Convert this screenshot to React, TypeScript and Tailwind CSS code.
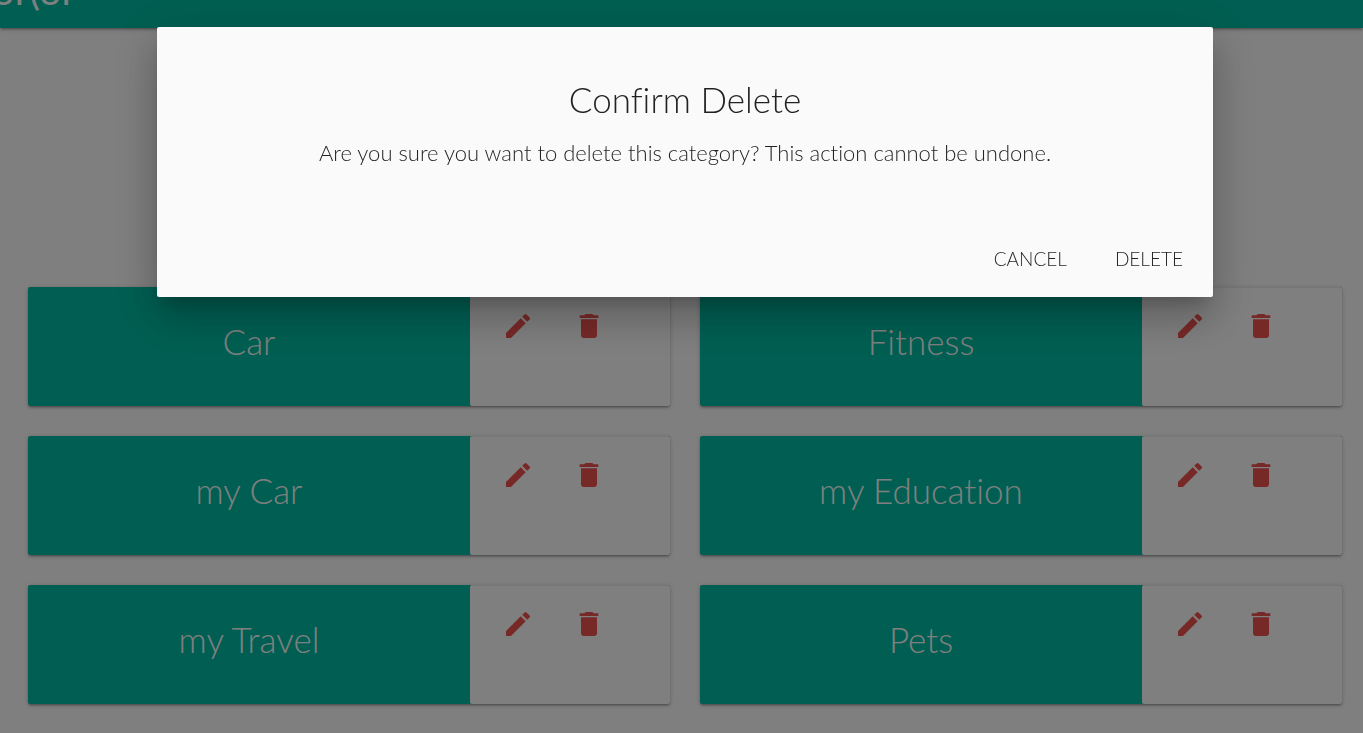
import { MdEdit, MdDelete } from "react-icons/md";

const categories = ["Car", "Fitness", "my Car", "my Education", "my Travel", "Pets"];

function CategoryCard({ name }: { name: string }) {
  return (
    <li className="flex h-[119px] rounded-[2px] bg-[#00bfa5] shadow-[0_2px_2px_0_rgba(0,0,0,0.14),0_3px_1px_-2px_rgba(0,0,0,0.12),0_1px_5px_0_rgba(0,0,0,0.2)]">
      <h2 className="flex-1 pt-8 text-center text-[35px] leading-[44px] text-white">{name}</h2>
      <div className="flex w-[200px] items-start gap-[39px] rounded-[2px] border-t border-[#eeeeee] bg-white pt-[22px] pl-8 text-[#ef5350]">
        <button type="button" aria-label={`Edit ${name}`}>
          <MdEdit size={32} />
        </button>
        <button type="button" aria-label={`Delete ${name}`}>
          <MdDelete size={32} />
        </button>
      </div>
    </li>
  );
}

export default function App() {
  return (
    <div className="min-h-screen bg-white font-['Lato',sans-serif] font-light [font-variant-ligatures:none]">
      <header className="flex h-7 items-end overflow-hidden bg-[#00bfa5] pb-[18px] text-white shadow-[0_2px_2px_0_rgba(0,0,0,0.14),0_3px_1px_-2px_rgba(0,0,0,0.12),0_1px_5px_0_rgba(0,0,0,0.2)]">
        <a href="#" className="-ml-2 text-[40px] leading-10 font-normal">or(or</a>
      </header>
      <main className="pt-[259px] pr-[21px] pb-7 pl-7">
        <ul className="grid grid-cols-2 gap-[30px]">
          {categories.map((name) => (
            <CategoryCard key={name} name={name} />
          ))}
        </ul>
      </main>
      <div className="fixed inset-0 flex items-start bg-black/50 pt-[27px] pr-[150px] pl-[157px]">
        <section
          role="dialog"
          aria-modal="true"
          aria-labelledby="confirm-title"
          className="w-full rounded-[2px] bg-[#fafafa] text-black/87 shadow-[0_24px_38px_3px_rgba(0,0,0,0.14),0_9px_46px_8px_rgba(0,0,0,0.12),0_11px_15px_-7px_rgba(0,0,0,0.2)]"
        >
          <div className="px-6 pt-12 text-center">
            <h1 id="confirm-title" className="text-[35px] leading-[48px]">Confirm Delete</h1>
            <p className="pt-4 text-[22px] leading-7">Are you sure you want to delete this category? This action cannot be undone.</p>
          </div>
          <footer className="flex justify-end gap-12 px-[30px] pt-[76px] pb-[22px] text-[19px] leading-8">
            <button type="button">CANCEL</button>
            <button type="button">DELETE</button>
          </footer>
        </section>
      </div>
    </div>
  );
}
